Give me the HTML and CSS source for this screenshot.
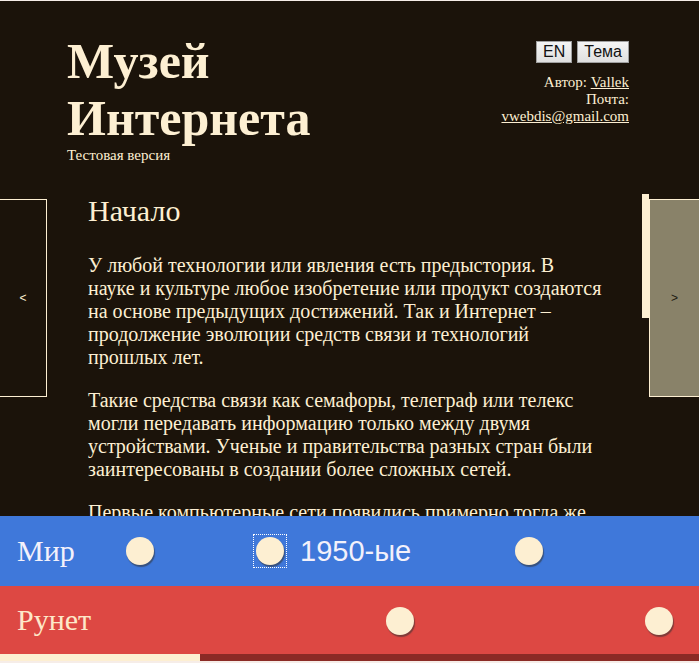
FILE: index.html
```html
<!DOCTYPE html>
<html lang="ru">
<head>
<meta charset="utf-8">
<title>Музей Интернета</title>
<link rel="stylesheet" href="styles.css">
</head>
<body>
<div class="page">
  <header class="top">
    <div class="brand">
      <h1 class="title">Музей<br>Интернета</h1>
      <div class="subtitle">Тестовая версия</div>
    </div>
    <div class="meta">
      <div class="buttons">
        <button class="btn">EN</button>
        <button class="btn">Тема</button>
      </div>
      <div class="author">Автор: <a href="#">Vallek</a><br>Почта:<br><a href="#">vwebdis@gmail.com</a></div>
    </div>
  </header>
  <main class="stage">
    <div class="nav nav-prev">&lt;</div>
    <article class="content">
      <h2 class="heading">Начало</h2>
      <p>У любой технологии или явления есть предыстория. В науке и культуре любое изобретение или продукт создаются на основе предыдущих достижений. Так и Интернет – продолжение эволюции средств связи и технологий прошлых лет.</p>
      <p>Такие средства связи как семафоры, телеграф или телекс могли передавать информацию только между двумя устройствами. Ученые и правительства разных стран были заинтересованы в создании более сложных сетей.</p>
      <p>Первые компьютерные сети появились примерно тогда же</p>
    </article>
    <div class="scroll"><div class="thumb"></div></div>
    <div class="nav nav-next">&gt;</div>
  </main>
  <footer class="timelines">
    <div class="band band-world">
      <span class="band-label">Мир</span>
      <span class="point" style="left:126px"><span class="dot"></span></span>
      <span class="point point-active" style="left:256px"><span class="dot"></span></span>
      <span class="era" style="left:300px">1950-ые</span>
      <span class="point" style="left:515px"><span class="dot"></span></span>
    </div>
    <div class="band band-runet">
      <span class="band-label">Рунет</span>
      <span class="point" style="left:386px"><span class="dot"></span></span>
      <span class="point" style="left:645px"><span class="dot"></span></span>
    </div>
    <div class="progress"><div class="progress-fill" style="width:200px"></div></div>
  </footer>
</div>
</body>
</html>
```
FILE: styles.css
```css
html {
  background: #f6ede8;
}
body {
  margin: 0;
  font-family: "Liberation Serif", "Times New Roman", serif;
  color: #fdefd2;
}
.page {
  margin-top: 1px;
  height: 660px;
  display: flex;
  flex-direction: column;
  background: #1b130a;
  overflow: hidden;
}
.top {
  height: 193px;
  flex: none;
  box-sizing: border-box;
  display: flex;
  justify-content: space-between;
  align-items: flex-start;
  padding: 32px 70px 0 67px;
}
.title {
  margin: 0;
  font-size: 50px;
  line-height: 57px;
  font-weight: bold;
  color: #fdefd2;
}
.subtitle {
  font-size: 15px;
  line-height: 17px;
}
.meta {
  padding-top: 8px;
  display: flex;
  flex-direction: column;
  align-items: flex-end;
}
.buttons {
  display: flex;
  gap: 5px;
}
.btn {
  font-family: "Liberation Sans", Arial, sans-serif;
  font-size: 16px;
  line-height: 18px;
  padding: 1px 6px;
  margin: 0;
  border: 1px solid #a0a0a0;
  border-radius: 0;
  background: linear-gradient(#f4f4f4, #e0e0e0);
  color: #111;
}
.author {
  margin-top: 11px;
  font-size: 15px;
  line-height: 17px;
  text-align: right;
}
.author a {
  color: #fdefd2;
}
.stage {
  height: 322px;
  flex: none;
  display: grid;
  grid-template-columns: 47px 1fr 7px 50px;
  overflow: hidden;
}
.nav {
  margin-top: 5px;
  height: 198px;
  box-sizing: border-box;
  border: 1px solid #fdefd2;
  display: flex;
  align-items: center;
  justify-content: center;
  font-family: "Liberation Sans", Arial, sans-serif;
  font-size: 12px;
}
.nav-prev {
  border-left: none;
  color: #fdefd2;
}
.nav-next {
  border-right: none;
  background: #898269;
  color: #1e1a12;
}
.content {
  padding: 0 38px 0 41px;
  overflow: hidden;
  font-size: 20px;
  line-height: 23px;
}
.heading {
  margin: 0 0 25px;
  font-size: 30px;
  line-height: 34.5px;
  font-weight: normal;
}
.content p {
  margin: 0 0 20px;
}
.scroll {
  height: 100%;
}
.thumb {
  height: 124px;
  background: #fdefd2;
}
.timelines {
  flex: none;
  display: flex;
  flex-direction: column;
}
.band {
  position: relative;
  display: flex;
  align-items: center;
  padding-left: 17px;
}
.band-world {
  height: 70px;
  background: #3f78da;
  color: #f3f1fb;
}
.band-runet {
  height: 68px;
  background: #dd4843;
  color: #fde8c9;
}
.band-label {
  font-size: 30px;
  line-height: 34.5px;
}
.point {
  position: absolute;
  top: 21px;
  width: 28px;
  height: 28px;
  display: block;
}
.point-active {
  outline: 1px dotted #ffffff;
  outline-offset: 2px;
}
.dot {
  display: block;
  width: 28px;
  height: 28px;
  border-radius: 50%;
  background: #fdefd2;
  box-shadow: 1px 2px 1px rgba(50, 50, 50, 0.55);
}
.era {
  position: absolute;
  top: 18px;
  font-family: "Liberation Sans", Arial, sans-serif;
  font-size: 29px;
  line-height: 34px;
  color: #f3f1fb;
}
.progress {
  height: 7px;
  background: #8b2a25;
}
.progress-fill {
  height: 100%;
  background: #fdefd2;
}
```
